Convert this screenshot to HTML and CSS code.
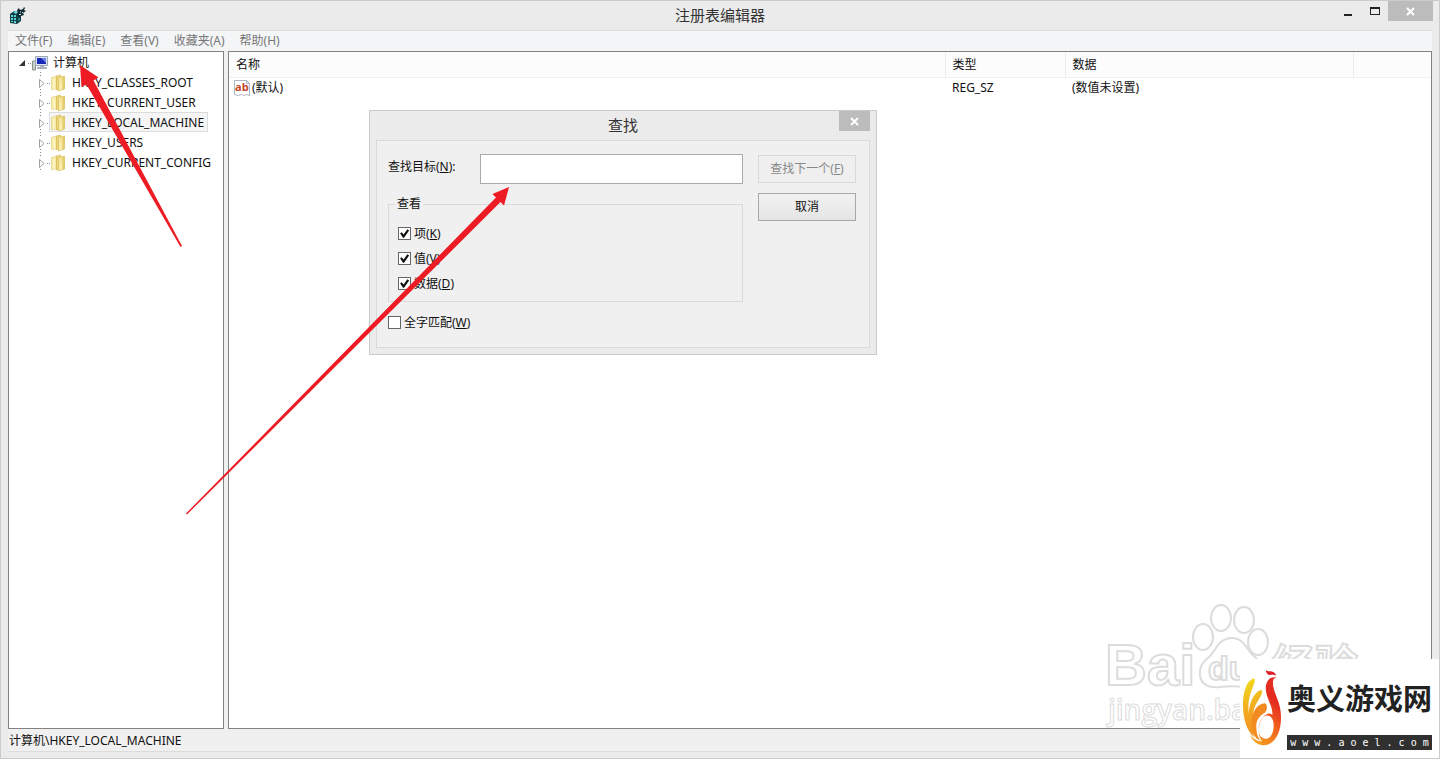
FILE: index.html
```html
<!DOCTYPE html>
<html lang="zh-CN">
<head>
<meta charset="utf-8">
<title>注册表编辑器</title>
<link rel="stylesheet" href="styles.css">
</head>
<body>
<svg class="symbols" aria-hidden="true">
  <defs>
    <linearGradient id="gold" x1="0" x2="1" y1="0" y2="0">
      <stop offset="0" stop-color="#fbf0ab"/><stop offset="0.6" stop-color="#f0dc85"/><stop offset="1" stop-color="#dcc05a"/>
    </linearGradient>
    <symbol id="branch" viewBox="0 0 36 20">
      <path d="M5.500 0v1M5.500 3v1M5.500 17v1M12 11.500h1M14 11.500h1" stroke="#8a8a8a"/>
      <path d="M4.500 7.500v8l4.500-4z" fill="#fff" stroke="#a0a0a0"/>
      <path d="M16.500 5.500l5-1.500v13l-5 .5z" fill="#f7eba8" stroke="#e2d07e" stroke-width=".7"/>
      <path d="M21.500 4l4-1v14l-4 1z" fill="#ecd578" stroke="#d6bb57" stroke-width=".7"/>
      <path d="M23.500 5.500l6-1.500v13l-6 2z" fill="url(#gold)" stroke="#d8be60" stroke-width=".7"/>
      <path d="M26 10v8" stroke="#fff6c4"/><path d="M19 7v10" stroke="#fff9d8"/>
    </symbol>
  </defs>
</svg>

<div class="window">
  <header class="titlebar">
    <svg class="app-icon" width="18" height="18" viewBox="0 0 18 18" aria-hidden="true">
      <path d="M1 7l4-3 7 1v9l-4 3-7-1z" fill="#123e45"/>
      <path d="M2 8h2v2H2zM5 8h2v2H5zM2 11h2v2H2zM5 11h2v2H5zM2 14h2v1H2zM5 14h2v2H5z" fill="#58d6d8"/>
      <path d="M9 9l2-1v2l-2 1zM9 12l2-1v2l-2 1z" fill="#27949c"/>
      <path d="M4 5l3-1 2 1-2 2z" fill="#69dfe0"/>
      <path d="M8 3l2-2 1 2 3-1 1-2 1 1-1 2 2 1-3 2 1 2-3 1-2 2-2-3 1-2z" fill="#102b31"/>
      <path d="M11 4l1 1-1 1zM13 5h1v1h-1zM10 7h2v1h-2z" fill="#bfeff0"/>
    </svg>
    <h1 class="title">注册表编辑器</h1>
    <div class="window-buttons">
      <button class="win-btn" aria-label="最小化"><svg width="10" height="12"><path d="M1 9h8v2H1z" fill="#222"/></svg></button>
      <button class="win-btn" aria-label="最大化"><svg width="10" height="12"><path d="M0 2h10v8H0zM1 4v5h8V4z" fill="#222" fill-rule="evenodd"/></svg></button>
      <button class="win-btn close" aria-label="关闭"><svg width="9" height="9"><path d="M1 1l7 7M8 1l-7 7" stroke="#fff" stroke-width="2"/></svg></button>
    </div>
  </header>

  <div class="client">
    <nav class="menubar">
      <button>文件(F)</button><button>编辑(E)</button><button>查看(V)</button><button>收藏夹(A)</button><button>帮助(H)</button>
    </nav>
    <main class="panes">
      <section class="tree-pane">
        <div class="root">
          <svg width="31" height="20" aria-hidden="true">
            <path d="M0 14h6v-6z" fill="#333"/>
            <path d="M9 11.500h1M11 11.500h1" stroke="#888"/>
            <path d="M13.500 9h3v9h-3z" fill="#c9d0c8" stroke="#87948a"/>
            <path d="M16.500 4.500h12v9h-12z" fill="#dce5f1" stroke="#9aa6b8"/>
            <path d="M18 6h9v6h-9z" fill="#1727b5"/><path d="M22 6h5v5z" fill="#6d80ea"/>
            <path d="M21 14h4v1h3v2H18v-2h3z" fill="#a8b1bf"/>
          </svg>
          <span>计算机</span>
        </div>
        <ul class="tree">
          <li><svg width="36" height="20"><use href="#branch"/></svg><span>HKEY_CLASSES_ROOT</span></li>
          <li><svg width="36" height="20"><use href="#branch"/></svg><span>HKEY_CURRENT_USER</span></li>
          <li class="selected"><svg width="36" height="20"><use href="#branch"/></svg><span>HKEY_LOCAL_MACHINE</span></li>
          <li><svg width="36" height="20"><use href="#branch"/></svg><span>HKEY_USERS</span></li>
          <li><svg width="36" height="20"><use href="#branch"/></svg><span>HKEY_CURRENT_CONFIG</span></li>
        </ul>
      </section>
      <section class="list-pane">
        <table class="values">
          <colgroup><col><col class="col-type"><col class="col-data"><col class="col-rest"></colgroup>
          <thead><tr><th>名称</th><th>类型</th><th>数据</th><th></th></tr></thead>
          <tbody><tr>
            <td><div class="value-name">
              <svg width="16" height="16" viewBox="0 0 16 16" aria-hidden="true">
                <path d="M.5.500h12l3 3v12l-3-1-2 1-3-1-3 1-4-1z" fill="#fff" stroke="#aab4c2"/>
                <path d="M12.500.500v3h3" fill="none" stroke="#aab4c2"/>
                <text x="1" y="11" class="ab">ab</text>
              </svg>
              <span>(默认)</span></div></td>
            <td>REG_SZ</td><td>(数值未设置)</td><td></td>
          </tr></tbody>
        </table>
      </section>
    </main>
    <footer class="status">计算机\HKEY_LOCAL_MACHINE</footer>
  </div>

  <form class="dialog" role="dialog" aria-labelledby="find-title">
    <header class="dialog-bar">
      <h2 id="find-title">查找</h2>
      <button type="button" class="dialog-close" aria-label="关闭"><svg width="9" height="9"><path d="M1 1l7 7M8 1l-7 7" stroke="#fff" stroke-width="2"/></svg></button>
    </header>
    <div class="dialog-body">
      <div class="fields">
        <div class="field"><label for="target">查找目标(<u>N</u>):</label><input id="target" type="text"></div>
        <fieldset>
          <legend>查看</legend>
          <label class="check"><input type="checkbox" checked><span>项(<u>K</u>)</span></label>
          <label class="check"><input type="checkbox" checked><span>值(<u>V</u>)</span></label>
          <label class="check"><input type="checkbox" checked><span>数据(<u>D</u>)</span></label>
        </fieldset>
        <label class="check"><input type="checkbox"><span>全字匹配(<u>W</u>)</span></label>
      </div>
      <div class="actions">
        <button type="submit" disabled>查找下一个(<u>F</u>)</button>
        <button type="button">取消</button>
      </div>
    </div>
  </form>

  <svg class="arrows" width="520" height="530" aria-hidden="true">
    <path d="M80 65l1.500 22 5-2.500L180.500 247l1.500-1L93.500 80.500l5-3z" fill="#ed1c24"/>
    <path d="M509 187l-16.500 7 3.500 3.500L186 513.500l1 1L500.500 202l3.500 3.500z" fill="#ed1c24"/>
  </svg>

  <svg class="watermark" width="260" height="130" aria-hidden="true">
    <g class="outline">
      <text x="0" y="82" class="wm-bai">Bai</text>
      <path d="M127 35c-13 0-16 12-22 18-7 6-11 10-10 20 2 10 11 12 20 11 8-1 16-1 24 0 14 2 24-4 22-16-2-8-9-11-15-18-5-6-9-15-19-15z"/>
      <ellipse cx="98" cy="34" rx="10" ry="13"/>
      <ellipse cx="116" cy="15" rx="10" ry="13"/>
      <ellipse cx="139" cy="17" rx="10" ry="13"/>
      <ellipse cx="153" cy="39" rx="10" ry="13"/>
      <text x="103" y="77" class="wm-du">du</text>
      <text x="167" y="78" class="wm-exp">经验</text>
      <text x="3" y="117" class="wm-url">jingyan.ba</text>
    </g>
  </svg>

  <aside class="brand">
    <svg width="42" height="84" viewBox="0 0 42 84" aria-hidden="true">
      <defs>
        <linearGradient id="flame" gradientUnits="userSpaceOnUse" x1="2" x2="26" y1="15" y2="72"><stop offset="0" stop-color="#efd51c"/><stop offset=".5" stop-color="#f2a622"/><stop offset="1" stop-color="#f08a20"/></linearGradient>
        <linearGradient id="body" gradientUnits="userSpaceOnUse" x1="8" x2="40" y1="74" y2="40"><stop offset="0" stop-color="#f6a41f"/><stop offset=".6" stop-color="#f0621e"/><stop offset="1" stop-color="#e52c20"/></linearGradient>
      </defs>
      <path d="M12 10c3 0 1 5-1 10-3 8-5 15-4 25 1 11 3 19 6 27C5 65 1 52 1 38 1 24 5 12 12 10z" fill="url(#flame)"/>
      <path d="M20 22c3 1 0 6-3 11-4 6-6 12-5 20 0 8 2 15 6 22-7-5-11-14-11-26 0-14 6-25 13-27z" fill="url(#flame)"/>
      <path d="M24 36c3 1 3 7 0 10-5 3-9 7-9 14 0 6 1 11 5 16-6-4-10-11-10-19 0-11 6-21 14-21z" fill="#f28a20"/>
      <path d="M37 9c-5 0-5 5-4 10 2 10 8 17 8 32 0 18-8 29-18 29-7 0-12-5-15-11 6 6 9 7 13 7-6-8-4-23 4-28 3-2 6-1 7 0 0-11-7-17-7-28C25 12 30 7 37 9zM25 49c-6 2-9 11-7 18 1 5 5 7 9 6 5-2 7-10 6-17-1-5-4-8-8-7z" fill="url(#body)" fill-rule="evenodd"/>
      <path d="M25 1c3 3 8-1 11 6-4-2-6 0-8-1s-3-3-3-5z" fill="#df2029"/>
    </svg>
    <div class="brand-text">
      <strong>奥义游戏网</strong>
      <span>w w w . a o e l . c o m</span>
    </div>
  </aside>
</div>
</body>
</html>
```
FILE: styles.css
```css
* { box-sizing: border-box; }
body {
  margin: 0;
  color: #111;
  font: 12px/18px "Noto Sans", "Noto Sans CJK SC", sans-serif;
}
button, input { font: inherit; color: inherit; }
button { padding: 0; border: 0; background: none; }
h1, h2 { margin: 0; font-weight: 400; font-size: 15px; line-height: 20px; color: #333; text-align: center; }

.symbols { position: absolute; width: 0; height: 0; }
.window {
  position: relative;
  display: flex;
  flex-direction: column;
  min-height: 100vh;
  padding: 0 7px 6px;
  background: #ebebeb;
  border: 1px solid #cbcbcb;
  overflow: hidden;
}
.titlebar { display: grid; grid-template-columns: 135px 1fr 135px; height: 29px; }
.app-icon { margin: 6px 0 0 1px; }
.title { padding-top: 4px; }
.window-buttons { display: flex; justify-content: flex-end; align-items: flex-start; margin-right: -1px; }
.win-btn { display: grid; place-items: center; width: 27px; height: 20px; }
.win-btn.close { width: 45px; background: #bcbcbc; }

.client {
  flex: 1;
  display: flex;
  flex-direction: column;
  border-top: 1px solid #dcdcdc;
  border-bottom: 1px solid #dcdcdc;
  background: #f0f0f0;
}
.menubar { display: flex; gap: 15px; height: 20px; padding-left: 7px; background: #f4f5f7; }
.menubar button { color: #777; }
.panes { flex: 1; display: grid; grid-template-columns: 216px 1fr; gap: 4px; }
.tree-pane, .list-pane { background: #fff; border: 1px solid #828282; }

.root { display: flex; height: 20px; padding-left: 10px; gap: 3px; }
.root span { padding-top: 2px; }
.tree { margin: 0; padding: 0 0 0 26px; list-style: none; }
.tree li { display: flex; height: 20px; width: max-content; }
.tree span { padding: 2px 4px 0 1px; }
.tree svg { flex: none; }
.selected { position: relative; background: linear-gradient(#f5f5f5, #f5f5f5) no-repeat 14px 0; }
.selected::after { content: ""; position: absolute; inset: 0 0 0 14px; border: 1px solid #dcdcdc; }

.values { width: 100%; table-layout: fixed; border-collapse: collapse; }
.col-type { width: 120px; }
.col-data { width: 288px; }
.col-rest { width: 78px; }
.values th { height: 25px; padding: 1px 6px 0 7px; font-weight: 400; text-align: left; background: #fcfcfc; border-bottom: 1px solid #edf1f4; border-right: 1px solid #e6edf3; }
.values th:last-child { border-right: 0; }
.values td { height: 22px; padding: 0 7px; }
.values td:first-child { padding-left: 5px; }
.value-name { display: flex; align-items: center; gap: 2px; }
.ab { font: bold 11px "Open Sans", sans-serif; fill: #c5482c; }
.status { height: 22px; padding: 3px 1px 1px; }

.dialog {
  position: absolute;
  top: 109px;
  left: 368px;
  width: 508px;
  padding: 0 6px 6px;
  background: #ebebeb;
  border: 1px solid #cacaca;
}
.dialog-bar { display: grid; grid-template-columns: 31px 1fr 31px; height: 29px; }
.dialog-bar h2 { grid-column: 2; padding-top: 4px; }
.dialog-close { display: grid; place-items: center; height: 20px; background: #bcbcbc; }
.dialog-body {
  display: flex;
  gap: 15px;
  padding: 13px 13px 12px 11px;
  background: #f0f0f0;
  border: 1px solid #dadada;
}
.fields { flex: 1; }
.field { display: flex; align-items: center; }
.field label { flex: none; width: 92px; padding-bottom: 4px; }
.field input { flex: 1; min-width: 0; height: 30px; padding: 0 6px; background: #fff; border: 1px solid #aaa; }
fieldset { min-width: 0; margin: 11px 0 8px; padding: 8px 9px 5px; border: 1px solid #dadada; }
legend { margin-left: -3px; padding: 0 2px; }
.check { display: flex; align-items: center; gap: 3px; height: 25px; }
.check input { appearance: none; display: grid; width: 13px; height: 13px; margin: 0; background: #fff; border: 1px solid #666; }
.check input:checked::before {
  content: "";
  background: #111;
  clip-path: polygon(10% 48%, 25% 38%, 42% 60%, 76% 12%, 92% 22%, 46% 88%, 36% 88%);
}
.actions { display: flex; flex-direction: column; gap: 10px; width: 98px; padding-top: 1px; }
.actions button { height: 28px; border: 1px solid #a8a8a8; background: linear-gradient(#f1f1f1, #e5e5e5); }
.actions button:disabled { color: #888; border-color: #d8d8d8; background: #efefef; }

.arrows { position: absolute; top: -1px; left: -1px; pointer-events: none; }
.watermark { position: absolute; right: 74px; bottom: 25px; overflow: visible; pointer-events: none; }
.outline { fill: #fff; stroke: #dcdcdc; stroke-width: 2px; }
.wm-bai { font: bold 58px "Liberation Sans", sans-serif; }
.wm-du { font: bold 34px "Liberation Sans", sans-serif; }
.wm-exp { font: bold 43px "Noto Sans CJK SC", sans-serif; }
.wm-url { font: 600 28px "Open Sans", sans-serif; stroke-width: 1px; }

.brand {
  position: absolute;
  right: -1px;
  bottom: -1px;
  display: flex;
  gap: 5px;
  width: 200px;
  height: 100px;
  padding: 8px 8px 8px 2px;
  background: #fff;
}
.brand-text { flex: 1; display: flex; flex-direction: column; justify-content: space-between; white-space: nowrap; padding-bottom: 1px; }
.brand-text strong { font: bold 29px/60px "Noto Sans CJK SC", sans-serif; color: #222; }
.brand-text span { font: 10px/15px "DejaVu Sans Mono", monospace; color: #fff; background: #303030; text-align: center; }
```
